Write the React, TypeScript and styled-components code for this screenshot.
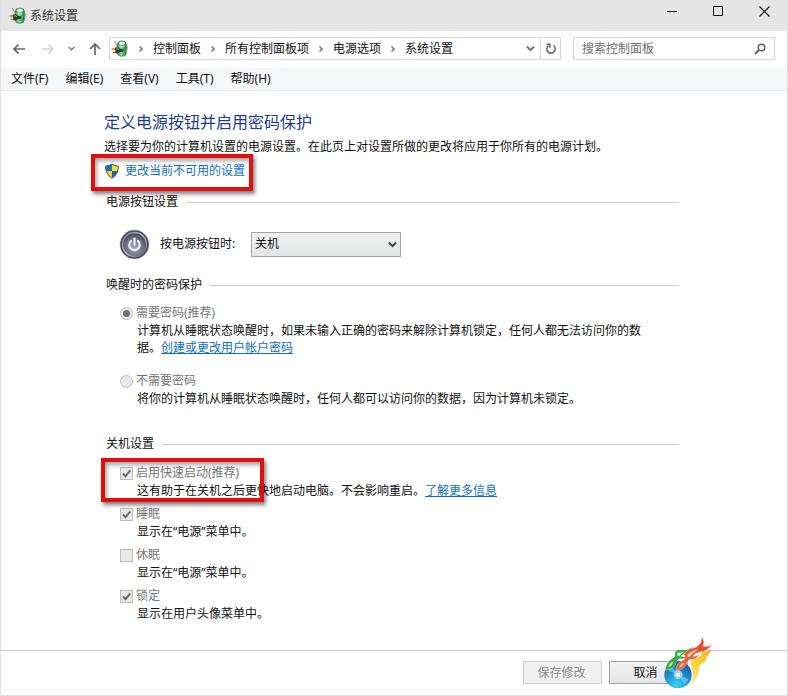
import React from "react";
import styled, { createGlobalStyle, css } from "styled-components";

const GlobalStyle = createGlobalStyle`
  *, *::before, *::after { box-sizing: border-box; }
  body {
    margin: 0;
    background: #fff;
    color: #111;
    font: 12px/18px "Noto Sans", "Noto Sans CJK SC", sans-serif;
  }
  button, input, select { font: inherit; color: inherit; }
  h1, h2, p { margin: 0; font-weight: 400; }
  svg { display: block; flex: none; }
`;

const Window = styled.div`
  min-height: 100vh;
  display: flex;
  flex-direction: column;
  border: 1px solid #e0e0e0;
  border-top: 0;
`;

const TitleBar = styled.header`
  display: flex;
  align-items: center;
  height: 31px;
  padding-left: 8px;
  background: #e5e5e5;
  color: #333;
`;

const WindowTitle = styled.span`
  flex: 1;
  padding-left: 3px;
`;

const CaptionButton = styled.button`
  display: grid;
  place-items: center;
  width: 46px;
  height: 23px;
  align-self: flex-start;
  padding: 0;
  border: 0;
  background: none;
`;

const NavBar = styled.nav`
  display: flex;
  align-items: center;
  height: 37px;
  padding: 0 12px 2px 4px;
`;

const NavButton = styled.button<{ $narrow?: boolean }>`
  display: grid;
  place-items: center;
  width: ${(p) => (p.$narrow ? 18 : 29)}px;
  height: 22px;
  padding: 0;
  border: 0;
  background: none;
`;

const NavGroup = styled.div`
  display: flex;
  align-items: center;
  width: 104px;
`;

const AddressBar = styled.div`
  flex: 1;
  display: flex;
  align-items: center;
  height: 23px;
  padding-left: 1px;
  border: 1px solid #d9d9d9;
`;

const Crumbs = styled.div`
  flex: 1;
  display: flex;
  align-items: center;
`;

const CrumbGap = styled.span`
  display: grid;
  place-items: center;
  width: 24px;
`;

const Crumb = styled.a`
  color: #111;
  text-decoration: none;
  white-space: nowrap;
`;

const AddressButton = styled.button<{ $divided?: boolean }>`
  display: grid;
  place-items: center;
  width: 20px;
  height: 21px;
  padding: 0;
  border: 0;
  background: none;
  ${(p) => p.$divided && css`border-left: 1px solid #d9d9d9;`}
`;

const SearchBox = styled.label`
  display: flex;
  align-items: center;
  width: 202px;
  height: 23px;
  margin-left: 12px;
  padding: 0 8px;
  border: 1px solid #d9d9d9;
`;

const SearchInput = styled.input`
  flex: 1;
  min-width: 0;
  padding: 0;
  border: 0;
  outline: 0;
  background: none;
  &::placeholder { color: #6d6d6d; opacity: 1; }
`;

const MenuBar = styled.div`
  display: flex;
  align-items: center;
  gap: 17px;
  height: 23px;
  padding-left: 10px;
  background: #f5f6f7;
  border-bottom: 1px solid #e8e9ea;
`;

const MenuItem = styled.button`
  padding: 0;
  border: 0;
  background: none;
`;

const Content = styled.main`
  flex: 1;
  padding: 20px 108px 16px 103px;
`;

const PageTitle = styled.h1`
  font-size: 16px;
  line-height: 22px;
  color: #1b3c93;
`;

const Intro = styled.p`
  margin-top: 5px;
`;

const Link = styled.a<{ $plain?: boolean }>`
  display: inline-block;
  color: #0f6fc6;
  text-decoration: ${(p) => (p.$plain ? "none" : "underline")};
`;

const Marked = styled.div`
  position: relative;
`;

const Highlight = styled.span<{ $box: "link" | "option" }>`
  position: absolute;
  border: 4px solid #e01010;
  box-shadow: 2px 3px 4px rgba(0, 0, 0, 0.5), inset 2px 3px 4px rgba(0, 0, 0, 0.35);
  pointer-events: none;
  ${(p) =>
    p.$box === "link"
      ? css`left: -13px; top: -6px; width: 162px; height: 37px;`
      : css`left: -5px; top: -6px; width: 163px; height: 44px;`}
`;

const ShieldRow = styled.div`
  display: flex;
  align-items: center;
  gap: 5px;
  height: 22px;
  margin-top: 4px;
`;

const Section = styled.section<{ $top: number }>`
  margin-top: ${(p) => p.$top}px;
  padding-left: 2px;
`;

const SectionTitle = styled.h2`
  display: flex;
  align-items: center;
  gap: 8px;
  font-size: 12px;
  &::after {
    content: "";
    flex: 1;
    height: 1px;
    background: #cbcbcb;
  }
`;

const PowerRow = styled.div`
  display: flex;
  align-items: center;
  height: 32px;
  margin-top: 17px;
  padding-left: 13px;
`;

const PowerLabel = styled.label`
  width: 91px;
  margin-left: 10px;
`;

const SelectWrap = styled.div`
  display: grid;
  align-items: center;
  width: 150px;
  height: 25px;
  & > * { grid-area: 1 / 1; }
  & > svg { justify-self: end; margin-right: 4px; pointer-events: none; }
`;

const Select = styled.select`
  appearance: none;
  height: 25px;
  padding: 0 20px 0 3px;
  border: 1px solid #a6a6a6;
  border-radius: 0;
  background: linear-gradient(#f0f0f0, #e4e5e6);
`;

const Option = styled.div<{ $top: number }>`
  margin-top: ${(p) => p.$top}px;
  padding-left: 14px;
`;

const OptionLabel = styled.label`
  display: flex;
  align-items: center;
  gap: 3px;
  color: #757575;
`;

const Mark = styled.span`
  display: grid;
  place-items: center;
  & > * { grid-area: 1 / 1; }
`;

const Tick = styled.input`
  appearance: none;
  width: 13px;
  height: 13px;
  margin: 0;
  border: 1px solid #bcbcbc;
  border-radius: ${(p) => (p.type === "radio" ? "50%" : "0")};
  background: #e9e9e9;
`;

const OptionText = styled.p<{ $tight?: boolean }>`
  padding: 0 32px 0 17px;
  line-height: ${(p) => (p.$tight ? 17 : 18)}px;
`;

const Footer = styled.footer`
  display: flex;
  justify-content: flex-end;
  gap: 7px;
  padding: 10px 99px 11px 0;
  border-top: 1px solid #c8c8c8;
`;

const FooterButton = styled.button`
  width: 79px;
  height: 23px;
  padding: 0 2px 0 0;
  border: 1px solid #a2a2a2;
  background: linear-gradient(#f2f2f2, #e5e5e5);
  &:disabled {
    color: #8a8a8a;
    border-color: #cfcfcf;
    background: #f0f0f0;
  }
`;

const CancelSlot = styled.div`
  position: relative;
  & > ${FooterButton} { padding-right: 6px; }
`;

const LogoBadge = styled.span`
  position: absolute;
  left: 55px;
  top: -25px;
  pointer-events: none;
`;

const PlugIcon = () => (
  <svg width="18" height="17" viewBox="24 20 54 51" aria-hidden="true">
    <defs>
      <linearGradient id="battery" x1="0" y1="0" x2="1" y2="0">
        <stop offset="0" stopColor="#3f9a55" />
        <stop offset=".4" stopColor="#8fdc98" />
        <stop offset=".7" stopColor="#4cb465" />
        <stop offset="1" stopColor="#2b7542" />
      </linearGradient>
    </defs>
    <rect x="43" y="23" width="27" height="46" rx="12" fill="url(#battery)" stroke="#2e6e41" strokeWidth="2" />
    <ellipse cx="57" cy="30" rx="9" ry="5" fill="#eefaef" />
    <path d="M50 40h14" stroke="#b7ecbd" strokeWidth="4" />
    <path d="M34 24l9 14" stroke="#7b8b80" strokeWidth="3" />
    <path d="M69 33q7 8 2 18" stroke="#5d8f69" strokeWidth="3" fill="none" />
    <path d="M26 47h12M29 57h11" stroke="#b88522" strokeWidth="4" />
    <path d="M36 43q9-4 15 3l12 3-5 7-9 1q-7 6-12 2Z" fill="#303832" />
    <path d="M40 47q5-2 8 2" stroke="#b4bdb6" strokeWidth="3" fill="none" />
  </svg>
);

const Arrow = ({ kind, color = "#666" }: { kind: "back" | "forward" | "up"; color?: string }) => (
  <svg width="14" height="14" viewBox="0 0 14 14" fill="none" stroke={color} strokeWidth="1.7" aria-hidden="true">
    {kind === "back" && <path d="M13 7H2M6.5 2.5 2 7l4.5 4.5" />}
    {kind === "forward" && <path d="M1 7h11M7.500 2.500 12 7l-4.500 4.500" />}
    {kind === "up" && <path d="M7 13V2M2 7l5-5 5 5" />}
  </svg>
);

const Chevron = ({ dir, size = 8, color = "#777", weight = 1.6 }: {
  dir: "right" | "down"; size?: number; color?: string; weight?: number;
}) => (
  <svg width={size} height={size} viewBox="0 0 8 8" fill="none" stroke={color} strokeWidth={weight} aria-hidden="true">
    <path d={dir === "right" ? "M2.500 1.500 5 4 2.500 6.500" : "M.8 2.300 4 5.500 7.200 2.300"} />
  </svg>
);

const RefreshIcon = () => (
  <svg width="12" height="12" viewBox="0 0 12 12" fill="none" stroke="#666" strokeWidth="1.5" aria-hidden="true">
    <path d="M8.500 2.600A4.200 4.200 0 1 1 3.400 2.700" />
    <path d="M1.500 1.300H5v3.500" />
  </svg>
);

const SearchIcon = () => (
  <svg width="12" height="12" viewBox="0 0 12 12" fill="none" stroke="#666" aria-hidden="true">
    <circle cx="7.500" cy="4.500" r="3.300" strokeWidth="1.500" />
    <path d="M5.200 6.800 1 11" strokeWidth="2" />
  </svg>
);

const ShieldIcon = () => (
  <svg width="16" height="16" viewBox="0 0 16 16" aria-hidden="true">
    <defs>
      <clipPath id="shield">
        <path d="M8 1Q10.500 3 14.300 3Q14.800 11 8 15.200Q1.200 11 1.700 3Q5.500 3 8 1Z" />
      </clipPath>
    </defs>
    <g clipPath="url(#shield)">
      <path d="M0 0h8v8H0z" fill="#1e6fc4" />
      <path d="M8 0h8v8H8z" fill="#f9dc2e" />
      <path d="M0 8h8v8H0z" fill="#f8d424" />
      <path d="M8 8h8v8H8z" fill="#1b64b5" />
    </g>
    <path d="M8 1Q10.500 3 14.300 3Q14.800 11 8 15.200Q1.200 11 1.700 3Q5.500 3 8 1Z" fill="none" stroke="#31587c" strokeWidth="1" />
  </svg>
);

const PowerIcon = () => (
  <svg width="31" height="31" viewBox="0 0 31 31" aria-hidden="true">
    <defs>
      <radialGradient id="powerFace" cx="50%" cy="62%" r="55%">
        <stop offset="0" stopColor="#a8a8bc" />
        <stop offset=".6" stopColor="#77768b" />
        <stop offset="1" stopColor="#4c4b5e" />
      </radialGradient>
      <linearGradient id="powerRim" x1="0" y1="0" x2="1" y2="1">
        <stop offset="0" stopColor="#77778a" />
        <stop offset=".5" stopColor="#c6c6d0" />
        <stop offset="1" stopColor="#55556a" />
      </linearGradient>
    </defs>
    <circle cx="15.500" cy="15.500" r="15" fill="#d4d4dc" />
    <circle cx="15.500" cy="15.500" r="14.300" fill="#4c4b5e" />
    <circle cx="15.500" cy="15.500" r="12" fill="url(#powerFace)" stroke="url(#powerRim)" strokeWidth="1.300" />
    <path d="M12 12a5.200 5.200 0 1 0 7 0" fill="none" stroke="#f2f2f8" strokeWidth="2.200" strokeLinecap="round" />
    <path d="M15.500 9.500v6" stroke="#f2f2f8" strokeWidth="2.200" strokeLinecap="round" />
  </svg>
);

const FlameDiscLogo = () => (
  <svg width="48" height="53" viewBox="12 6 144 159" aria-hidden="true">
    <defs>
      <radialGradient id="disc" cx="45%" cy="85%" r="80%">
        <stop offset="0" stopColor="#3ad6f0" />
        <stop offset=".5" stopColor="#1e98d4" />
        <stop offset="1" stopColor="#1d55ac" />
      </radialGradient>
      <linearGradient id="yellowFlame" x1="0" y1="1" x2="1" y2="0">
        <stop offset="0" stopColor="#fdf0a0" />
        <stop offset=".5" stopColor="#f9d02a" />
        <stop offset="1" stopColor="#f4ae20" />
      </linearGradient>
      <linearGradient id="redFlame" x1="0" y1="1" x2="1" y2="0">
        <stop offset="0" stopColor="#ee6a3c" />
        <stop offset="1" stopColor="#e2432a" />
      </linearGradient>
    </defs>
    <path d="M88 154Q106 126 95 104Q86 82 102 74Q126 70 128 50Q138 58 154 46Q152 58 138 70Q142 76 132 84Q114 92 116 108Q116 134 88 154Z" fill="url(#yellowFlame)" />
    <circle cx="54" cy="122" r="41" fill="url(#disc)" />
    <path d="M54 122 23 108A34 34 0 0 1 34 95ZM54 122 85 136A34 34 0 0 1 74 150Z" fill="#7fdcf5" opacity=".6" />
    <circle cx="54" cy="122" r="13" fill="#a6d2ee" />
    <circle cx="54" cy="122" r="6" fill="#fff" />
    <path d="M15 108Q20 82 36 74Q48 68 44 56Q50 44 66 48Q80 50 98 38Q94 54 76 59Q64 62 62 67Q74 70 88 64Q80 77 60 74Q50 77 46 92Q38 107 15 108Z" fill="#36ab49" stroke="#fff" strokeWidth="1" />
    <path d="M25 99Q37 96 39 83Q28 86 25 99Z" fill="#b9e6ac" />
    <path d="M52 56Q48 65 58 66Q62 59 76 54Q62 56 52 56Z" fill="#d6f2cc" />
    <path d="M48 109Q48 87 66 80Q80 74 72 62Q80 46 100 42Q124 36 126 9Q136 22 129 37Q141 40 156 32Q144 50 120 54Q102 58 98 67Q110 68 120 61Q108 78 90 76Q80 82 78 93Q70 108 48 109Z" fill="url(#redFlame)" stroke="#fff" strokeWidth="1" />
    <path d="M58 101Q71 98 73 86Q60 88 58 101Z" fill="#fbc0a4" />
    <path d="M84 60Q78 70 88 69Q98 56 116 46Q98 49 84 60Z" fill="#fbd5bf" />
  </svg>
);

const menus = ["文件(F)", "编辑(E)", "查看(V)", "工具(T)", "帮助(H)"];
const crumbs = ["控制面板", "所有控制面板项", "电源选项", "系统设置"];

const RadioMark = ({ id, checked }: { id: string; checked?: boolean }) => (
  <Mark>
    <Tick type="radio" name="wake-password" id={id} disabled checked={!!checked} readOnly />
    {checked && (
      <svg width="13" height="13" viewBox="0 0 13 13" aria-hidden="true">
        <circle cx="6.500" cy="6.500" r="3.500" fill="#6e6e6e" />
      </svg>
    )}
  </Mark>
);

const CheckMark = ({ id, checked }: { id: string; checked?: boolean }) => (
  <Mark>
    <Tick type="checkbox" id={id} disabled checked={!!checked} readOnly />
    {checked && (
      <svg width="13" height="13" viewBox="0 0 13 13" fill="none" stroke="#6a6a6a" strokeWidth="2" aria-hidden="true">
        <path d="M3 6.500 5.500 9.200 10.300 3.300" />
      </svg>
    )}
  </Mark>
);

const CheckOption = ({ id, label, checked, top, children }: {
  id: string; label: string; checked?: boolean; top: number; children: React.ReactNode;
}) => (
  <Option $top={top}>
    <OptionLabel htmlFor={id}>
      <CheckMark id={id} checked={checked} />
      {label}
    </OptionLabel>
    <OptionText>{children}</OptionText>
  </Option>
);

export default function App() {
  return (
    <>
      <GlobalStyle />
      <Window>
        <TitleBar>
          <PlugIcon />
          <WindowTitle>系统设置</WindowTitle>
          <CaptionButton aria-label="最小化">
            <svg width="11" height="11" viewBox="0 0 11 11"><path d="M0 5.500h10" stroke="#111" /></svg>
          </CaptionButton>
          <CaptionButton aria-label="最大化">
            <svg width="11" height="11" viewBox="0 0 11 11"><path d="M.5.500h9v9h-9z" fill="none" stroke="#111" /></svg>
          </CaptionButton>
          <CaptionButton aria-label="关闭">
            <svg width="11" height="11" viewBox="0 0 11 11"><path d="M.5.500l10 10M10.500.500l-10 10" stroke="#111" strokeWidth="1.200" /></svg>
          </CaptionButton>
        </TitleBar>
        <NavBar>
          <NavGroup>
            <NavButton aria-label="后退"><Arrow kind="back" /></NavButton>
            <NavButton aria-label="前进"><Arrow kind="forward" color="#d0d0d0" /></NavButton>
            <NavButton $narrow aria-label="最近位置"><Chevron dir="down" size={7} /></NavButton>
            <NavButton aria-label="向上"><Arrow kind="up" /></NavButton>
          </NavGroup>
          <AddressBar>
            <Crumbs>
              <PlugIcon />
              {crumbs.map((c) => (
                <React.Fragment key={c}>
                  <CrumbGap><Chevron dir="right" /></CrumbGap>
                  <Crumb href="#">{c}</Crumb>
                </React.Fragment>
              ))}
            </Crumbs>
            <AddressButton aria-label="历史记录"><Chevron dir="down" size={9} weight={1.8} /></AddressButton>
            <AddressButton $divided aria-label="刷新"><RefreshIcon /></AddressButton>
          </AddressBar>
          <SearchBox>
            <SearchInput type="text" placeholder="搜索控制面板" aria-label="搜索控制面板" />
            <SearchIcon />
          </SearchBox>
        </NavBar>
        <MenuBar>
          {menus.map((m) => <MenuItem key={m}>{m}</MenuItem>)}
        </MenuBar>
        <Content>
          <PageTitle>定义电源按钮并启用密码保护</PageTitle>
          <Intro>选择要为你的计算机设置的电源设置。在此页上对设置所做的更改将应用于你所有的电源计划。</Intro>
          <Marked>
            <ShieldRow>
              <ShieldIcon />
              <Link $plain href="#">更改当前不可用的设置</Link>
            </ShieldRow>
            <Highlight $box="link" />
          </Marked>

          <Section $top={11}>
            <SectionTitle>电源按钮设置</SectionTitle>
            <PowerRow>
              <PowerIcon />
              <PowerLabel htmlFor="power-action">按电源按钮时:</PowerLabel>
              <SelectWrap>
                <Select id="power-action" defaultValue="关机">
                  <option>关机</option>
                </Select>
                <Chevron dir="down" size={9} color="#444" weight={1.8} />
              </SelectWrap>
            </PowerRow>
          </Section>

          <Section $top={16}>
            <SectionTitle>唤醒时的密码保护</SectionTitle>
            <Option $top={10}>
              <OptionLabel htmlFor="need-password">
                <RadioMark id="need-password" checked />
                需要密码(推荐)
              </OptionLabel>
              <OptionText $tight>
                计算机从睡眠状态唤醒时，如果未输入正确的密码来解除计算机锁定，任何人都无法访问你的数据。<Link href="#">创建或更改用户帐户密码</Link>
              </OptionText>
            </Option>
            <Option $top={16}>
              <OptionLabel htmlFor="no-password">
                <RadioMark id="no-password" />
                不需要密码
              </OptionLabel>
              <OptionText $tight>将你的计算机从睡眠状态唤醒时，任何人都可以访问你的数据，因为计算机未锁定。</OptionText>
            </Option>
          </Section>

          <Section $top={28}>
            <SectionTitle>关机设置</SectionTitle>
            <Marked>
              <CheckOption id="fast-start" label="启用快速启动(推荐)" checked top={11}>
                这有助于在关机之后更快地启动电脑。不会影响重启。<Link href="#">了解更多信息</Link>
              </CheckOption>
              <Highlight $box="option" />
            </Marked>
            <CheckOption id="sleep" label="睡眠" checked top={5}>显示在“电源”菜单中。</CheckOption>
            <CheckOption id="hibernate" label="休眠" top={5}>显示在“电源”菜单中。</CheckOption>
            <CheckOption id="lock" label="锁定" checked top={5}>显示在用户头像菜单中。</CheckOption>
          </Section>
        </Content>
        <Footer>
          <FooterButton disabled>保存修改</FooterButton>
          <CancelSlot>
            <FooterButton>取消</FooterButton>
            <LogoBadge><FlameDiscLogo /></LogoBadge>
          </CancelSlot>
        </Footer>
      </Window>
    </>
  );
}
